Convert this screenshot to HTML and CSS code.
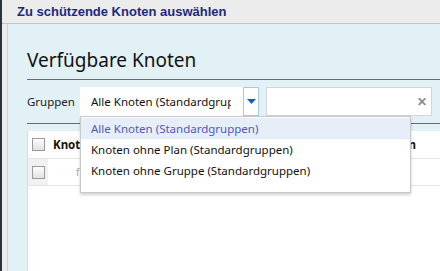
FILE: index.html
```html
<!DOCTYPE html>
<html lang="de">
<head>
<meta charset="utf-8">
<title>Zu schützende Knoten auswählen</title>
<link rel="stylesheet" href="styles.css">
</head>
<body>
<div class="frame">
  <div class="edge"></div>
  <div class="gutter"></div>
  <div class="main">
    <div class="titlebar">Zu schützende Knoten auswählen</div>
    <div class="panel">
      <h2 class="heading">Verfügbare Knoten</h2>
      <div class="rule"></div>
      <div class="filters">
        <span class="label">Gruppen</span>
        <div class="select">
          <span class="select-text">Alle Knoten (Standardgruppen)</span>
        </div>
        <div class="select-btn">
          <svg width="9" height="5" viewBox="0 0 9 5"><path d="M0 0H9L4.5 5Z" fill="#1f5fa6"/></svg>
        </div>
        <div class="search">
          <span class="clear">✕</span>
        </div>
        <div class="menu">
          <div class="item active">Alle Knoten (Standardgruppen)</div>
          <div class="item">Knoten ohne Plan (Standardgruppen)</div>
          <div class="item">Knoten ohne Gruppe (Standardgruppen)</div>
        </div>
      </div>
      <div class="rule rule-low"></div>
      <div class="table">
        <div class="row head">
          <div class="cell check"><span class="box"></span></div>
          <div class="cell name">Knoten</div>
          <div class="cell action">Aktion</div>
        </div>
        <div class="row">
          <div class="cell check shaded"><span class="box"></span></div>
          <div class="cell name"><span class="icon">f</span></div>
          <div class="cell action dots">⋮</div>
        </div>
      </div>
    </div>
  </div>
</div>
</body>
</html>
```

FILE: styles.css
```css
html, body {
  margin: 0;
  padding: 0;
}
body {
  width: 440px;
  height: 271px;
  overflow: hidden;
  background: #ffffff;
  font-family: "Noto Sans", "Open Sans", sans-serif;
}
.frame {
  display: flex;
  width: 440px;
  height: 271px;
}
.edge {
  width: 2px;
  background: #2d323b;
}
.gutter {
  width: 5px;
  background: #ececec;
}
.main {
  flex: 1;
  display: flex;
  flex-direction: column;
  min-width: 0;
}
.titlebar {
  height: 24px;
  box-sizing: border-box;
  background: #ececec;
  border-bottom: 1px solid #c4c4c4;
  font-family: "Liberation Sans", Arial, sans-serif;
  font-weight: bold;
  font-size: 13px;
  line-height: 24px;
  color: #1b2a7e;
  white-space: nowrap;
  margin-left: -5px;
  padding-left: 15px;
}
.panel {
  flex: 1;
  background: #e2f1f6;
  border-left: 1px solid #cbd6da;
  padding-left: 19px;
  display: flex;
  flex-direction: column;
  min-height: 0;
}
.heading {
  margin: 24px 0 0 0;
  font-weight: normal;
  font-size: 19px;
  line-height: 24px;
  color: #111;
  height: 31px;
}
.rule {
  height: 0;
  border-top: 1px solid #6b6b6b;
}
.filters {
  position: relative;
  display: flex;
  align-items: center;
  height: 29px;
  margin-top: 7px;
}
.label {
  font-size: 11.5px;
  color: #222;
  width: 53px;
}
.select {
  width: 163px;
  height: 29px;
  box-sizing: border-box;
  background: #fff;
  overflow: hidden;
  white-space: nowrap;
  padding-left: 11px;
  display: flex;
  align-items: center;
  font-size: 11.5px;
  color: #111;
}
.select-text {
  display: block;
  overflow: hidden;
  width: 140px;
}
.select-btn {
  width: 16px;
  height: 29px;
  box-sizing: border-box;
  border: 1px solid #a9c8e6;
  background: #fff;
  display: flex;
  align-items: center;
  justify-content: center;
}
.search {
  width: 166px;
  height: 29px;
  box-sizing: border-box;
  margin-left: 7px;
  border: 1px solid #d2d6d8;
  background: #fff;
  display: flex;
  align-items: center;
  justify-content: flex-end;
  padding-right: 4px;
}
.clear {
  font-size: 12px;
  color: #8a8a8a;
  font-weight: bold;
}
.menu {
  position: absolute;
  left: 53px;
  top: 29px;
  width: 331px;
  height: 77px;
  box-sizing: border-box;
  background: #fff;
  border: 1px solid #c9c9c9;
  box-shadow: 0 2px 3px rgba(0, 0, 0, 0.18);
  padding-top: 1px;
  z-index: 5;
}
.item {
  height: 21px;
  line-height: 21px;
  padding-left: 10px;
  font-size: 11.5px;
  color: #111;
  white-space: nowrap;
}
.item.active {
  background: #e6eff9;
  color: #5058bb;
}
.rule-low {
  margin-top: 7px;
}
.table {
  flex: 1;
  margin-top: 7px;
  background: #fff;
  border-left: 1px solid #d8dcde;
}
.row {
  display: flex;
  height: 26px;
  border-bottom: 1px solid #e4e4e4;
  align-items: stretch;
}
.row.head {
  height: 27px;
}
.cell {
  display: flex;
  align-items: center;
  font-size: 11.5px;
}
.check {
  width: 20px;
  justify-content: center;
}
.shaded {
  background: #f1f1f1;
}
.box {
  width: 11px;
  height: 11px;
  border: 1px solid #9a9a9a;
  background: linear-gradient(#fdfdfd, #e2e2e2);
}
.name {
  flex: 1;
  padding-left: 5px;
  font-weight: bold;
  color: #111;
}
.icon {
  margin-left: 23px;
  color: #aaa;
  font-weight: normal;
  font-size: 10px;
}
.action {
  width: 40px;
  font-weight: bold;
  color: #111;
  justify-content: flex-end;
  padding-right: 24px;
}
.dots {
  color: #777;
  font-weight: normal;
  padding-right: 25px;
}
```
